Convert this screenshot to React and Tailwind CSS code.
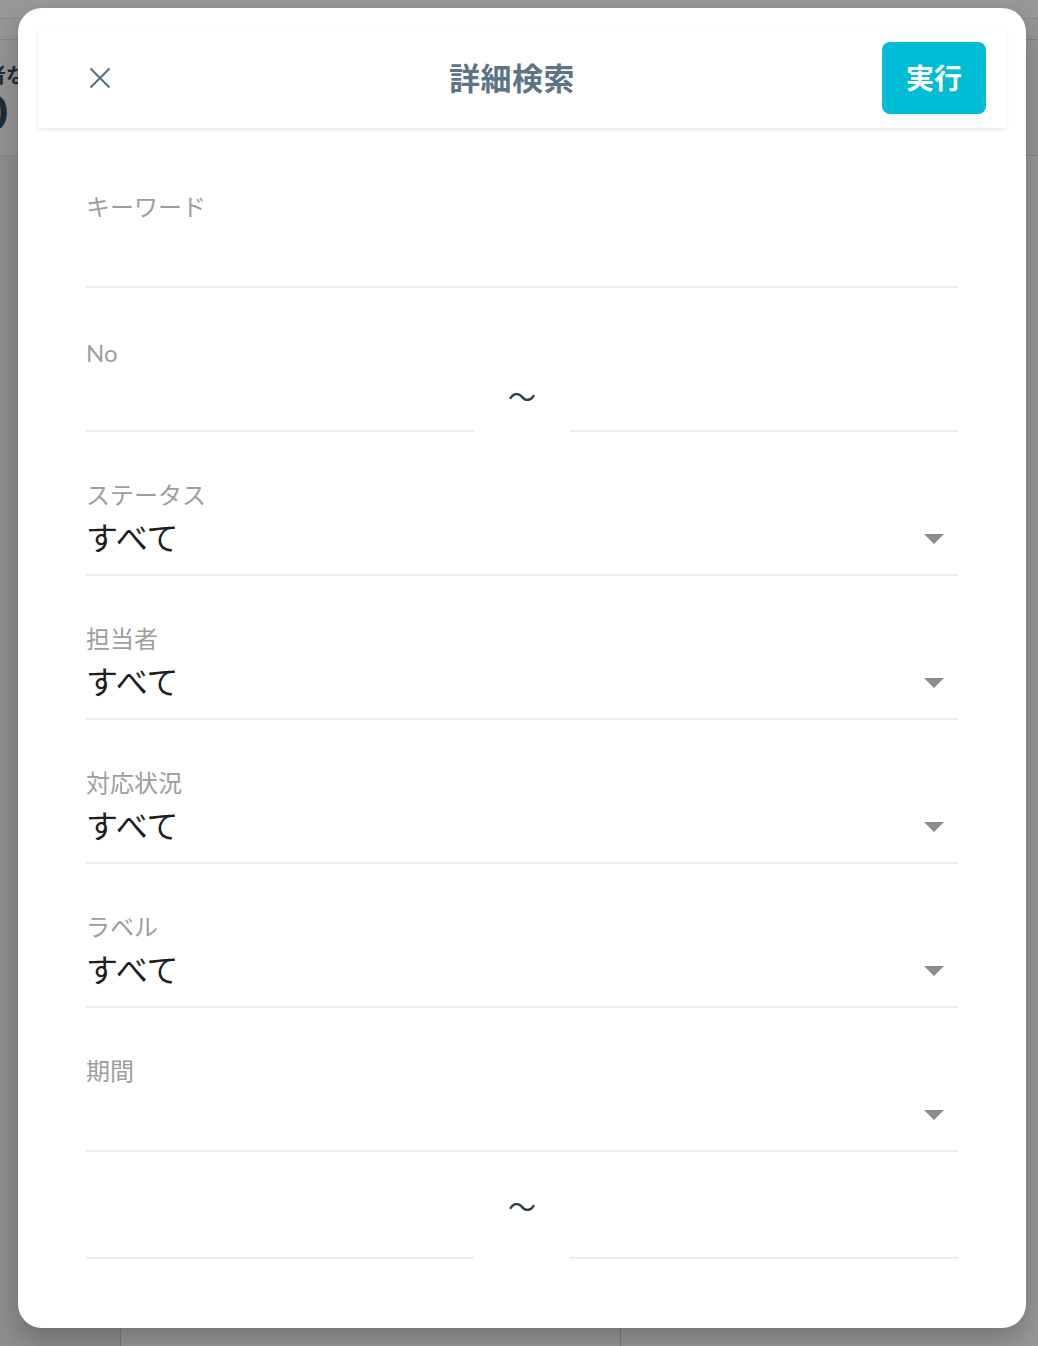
import React from "react";

const FONT = { fontFamily: '"Lato", "Noto Sans CJK JP", sans-serif' };

function Caret() {
  return (
    <div className="w-0 h-0 border-x-[10px] border-x-transparent border-t-[10px] border-t-[#8c8c8c]" />
  );
}

function SelectField({ label, value }) {
  return (
    <div className="mt-[45px] border-b-2 border-[#ececec]">
      <div className="h-[36px] leading-[36px] text-[24px] text-[#9e9e9e]">{label}</div>
      <div className="h-[61px] pt-[5px]">
        <div className="h-[40px] flex items-center justify-between pr-[14px]">
          <span className="text-[32px] leading-[40px] text-[#1f1f1f]">{value}</span>
          <div className="mt-[2px]">
            <Caret />
          </div>
        </div>
      </div>
    </div>
  );
}

export default function App() {
  return (
    <div className="relative w-full h-[1346px] overflow-hidden bg-white" style={FONT}>
      {/* underlying page */}
      <div className="h-[19px] bg-white border-b border-[#e6e6e6]" />
      <div className="h-[21px] bg-[#fcfcfc] border-b border-[#dcdcdc]" />
      <div className="h-[115px] bg-[#fafafa] flex flex-col justify-center gap-0">
        <span className="text-[20px] leading-[28px] font-bold text-[#34495e] -ml-[14px]">者な</span>
        <span className="text-[48px] leading-[46px] font-bold text-[#34495e] -ml-[20px]">0</span>
      </div>
      <div className="h-[1191px] bg-[#eeeeee] border-t border-[#e0e0e0] flex">
        <div className="w-[121px] border-r border-[#d0d0d0]" />
        <div className="w-[500px] bg-white border-r border-[#d0d0d0]" />
        <div className="flex-1 bg-white" />
      </div>

      {/* overlay */}
      <div className="absolute inset-0 bg-black/40 pt-[8px] pl-[18px]">
        <div className="w-[1008px] h-[1320px] bg-white rounded-[24px] shadow-[0_12px_30px_rgba(0,0,0,0.25)] px-[20px] pt-[20px]">
          {/* header */}
          <div className="h-[100px] bg-white shadow-[0_2px_4px_rgba(0,0,0,0.08)] flex items-center justify-between pl-[50px] pr-[20px]">
            <svg width="24" height="24" viewBox="0 0 24 24" className="text-[#5c7483]">
              <path d="M2.5 2.5 L21.5 21.5 M21.5 2.5 L2.5 21.5" stroke="currentColor" strokeWidth="2.2" strokeLinecap="butt" />
            </svg>
            <div className="text-[31px] font-bold text-[#5c7483] tracking-[0.5px] ml-[30px]">詳細検索</div>
            <button className="w-[104px] h-[72px] rounded-[8px] bg-[#00bcd4] text-white text-[28px] font-bold">実行</button>
          </div>

          {/* form */}
          <div className="px-[48px]">
            {/* keyword */}
            <div className="mt-[61px] border-b-2 border-[#ececec]">
              <div className="h-[36px] leading-[36px] text-[24px] text-[#9e9e9e]">キーワード</div>
              <div className="h-[61px]" />
            </div>

            {/* No */}
            <div className="mt-[47px]">
              <div className="h-[36px] leading-[36px] text-[24px] text-[#9e9e9e]">No</div>
              <div className="flex items-end">
                <div className="w-[388px] h-[61px] border-b-2 border-[#ececec]" />
                <div className="w-[96px] h-[61px] flex justify-center pt-[7px]">
                  <span className="text-[28px] leading-[38px] text-[#2c3e50]">〜</span>
                </div>
                <div className="w-[388px] h-[61px] border-b-2 border-[#ececec]" />
              </div>
            </div>

            <SelectField label="ステータス" value="すべて" />
            <SelectField label="担当者" value="すべて" />
            <SelectField label="対応状況" value="すべて" />
            <SelectField label="ラベル" value="すべて" />
            <SelectField label="期間" value="" />

            {/* date range */}
            <div className="flex items-end">
              <div className="w-[388px] h-[107px] border-b-2 border-[#ececec]" />
              <div className="w-[96px] h-[107px] flex justify-center pt-[36px]">
                <span className="text-[28px] leading-[38px] text-[#2c3e50]">〜</span>
              </div>
              <div className="w-[388px] h-[107px] border-b-2 border-[#ececec]" />
            </div>
          </div>
        </div>
      </div>
    </div>
  );
}
